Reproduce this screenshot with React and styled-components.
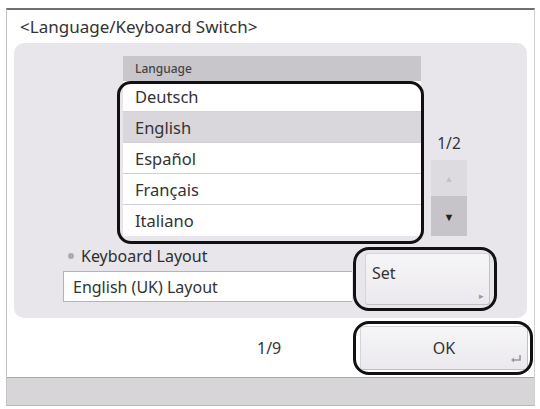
import React from 'react';
import styled, { createGlobalStyle } from 'styled-components';

const GlobalStyle = createGlobalStyle`
    html, body {
        margin: 0;
        padding: 0;
        background: #fff;
    }
    body {
        font-family: "Noto Sans", "Liberation Sans", sans-serif;
        color: #333;
    }
`

const Frame = styled.div`
    margin: 8px 0 0 6px;
    width: 529px;
    height: 398px;
    box-sizing: border-box;
    border-top: 2px solid #707070;
    border-left: 1px solid #c4c4c4;
    border-right: 1px solid #cfcfcf;
    border-bottom: 1px solid #b8b8b8;
    display: flex;
    flex-direction: column;
    background: #fff;
`

const Title = styled.div`
    height: 33px;
    display: flex;
    align-items: center;
    padding-left: 13px;
    font-size: 17px;
    color: #333;
`

const Panel = styled.div`
    margin: 0 7px 0 7px;
    height: 275px;
    box-sizing: border-box;
    padding: 13px 0 0 0;
    background: #e8e6ea;
    border-radius: 10px;
    display: flex;
    flex-direction: column;
`

const ListRow = styled.div`
    display: flex;
    align-items: flex-end;
    padding-left: 109px;
`

const List = styled.div`
    width: 298px;
    display: flex;
    flex-direction: column;
`

const ListHeader = styled.div`
    height: 25px;
    background: #c8c6ca;
    display: flex;
    align-items: center;
    padding-left: 12px;
    font-size: 12px;
    font-weight: 500;
    color: #444;
`

const Rows = styled.div`
    position: relative;
    display: flex;
    flex-direction: column;
    &::after {
        content: '';
        position: absolute;
        left: -6px;
        right: -3px;
        top: 0;
        bottom: -8px;
        border: 3px solid #111;
        border-radius: 14px;
        pointer-events: none;
    }
`

const Row = styled.div`
    height: 31px;
    box-sizing: border-box;
    display: flex;
    align-items: center;
    padding-left: 12px;
    font-size: 16.5px;
    color: #333;
    background: ${p => (p.selected ? '#d9d7db' : '#fff')};
    border-bottom: 1px solid #d3d1d5;
    &:last-child {
        border-bottom: none;
    }
`

const ScrollColumn = styled.div`
    margin-left: 10px;
    width: 36px;
    display: flex;
    flex-direction: column;
    align-items: center;
`

const PageLabel = styled.div`
    font-size: 15.5px;
    margin-bottom: 6px;
    color: #333;
`

const ScrollButton = styled.div`
    width: 36px;
    height: ${p => p.h}px;
    display: flex;
    align-items: center;
    justify-content: center;
    background: ${p => (p.disabled ? '#dddbdf' : '#c6c4c8')};
    color: ${p => (p.disabled ? '#c4c2c6' : '#222')};
    font-size: ${p => (p.disabled ? 9 : 11)}px;
`

const KeyboardRow = styled.div`
    display: flex;
    margin-top: 11px;
    padding-left: 49px;
`

const KeyboardField = styled.div`
    width: 289px;
    display: flex;
    flex-direction: column;
`

const FieldLabel = styled.div`
    height: 18px;
    display: flex;
    align-items: center;
    font-size: 16px;
    color: #2e2e2e;
    &::before {
        content: '';
        width: 6px;
        height: 6px;
        border-radius: 50%;
        background: #aaa;
        margin: 0 7px 0 5px;
    }
`

const FieldBox = styled.div`
    margin-top: 6px;
    height: 31px;
    box-sizing: border-box;
    background: #fff;
    border: 1px solid #b5b3b7;
    border-right: none;
    display: flex;
    align-items: center;
    padding-left: 9px;
    font-size: 16px;
    color: #333;
`

const Annotated = styled.div`
    position: relative;
    &::after {
        content: '';
        position: absolute;
        inset: ${p => p.inset};
        border: 3px solid #111;
        border-radius: 16px;
        pointer-events: none;
    }
`

const SetWrap = styled(Annotated)`
    margin: 6px 0 0 13px;
`

const KeyButton = styled.div`
    position: relative;
    width: ${p => p.w}px;
    height: ${p => p.h}px;
    box-sizing: border-box;
    background: linear-gradient(#f6f5f7, #ebe9ed);
    border: 1px solid #d6d4d8;
    border-right-color: #c2c0c4;
    border-bottom-color: #c2c0c4;
    border-radius: 3px;
    display: flex;
    align-items: ${p => (p.center ? 'center' : 'flex-start')};
    justify-content: ${p => (p.center ? 'center' : 'flex-start')};
    padding: ${p => (p.center ? '0' : '8px 0 0 6px')};
    font-size: 16px;
    color: #333;
`

const Corner = styled.span`
    position: absolute;
    right: 5px;
    bottom: 4px;
    color: #9a989c;
    font-size: ${p => p.size}px;
    line-height: 1;
`

const Footer = styled.div`
    height: 59px;
    display: flex;
    align-items: center;
    padding-right: 6px;
`

const FooterPage = styled.div`
    margin-left: 250px;
    font-size: 16px;
    color: #333;
`

const OkWrap = styled(Annotated)`
    margin-left: auto;
`

const BottomBar = styled.div`
    flex: 1;
    background: #d7d5d8;
    border-top: 1px solid #a9a7ab;
`

const languages = ['Deutsch', 'English', 'Español', 'Français', 'Italiano'];

const EnterIcon = () => (
    <svg width="12" height="10" viewBox="0 0 12 10">
        <path d="M10 1 V6 H3" fill="none" stroke="#9a989c" strokeWidth="1.6" />
        <path d="M1 6 L4 3.5 V8.5 Z" fill="#9a989c" />
    </svg>
);

const App = () => {
    return <>
        <GlobalStyle />
        <Frame>
            <Title>&lt;Language/Keyboard Switch&gt;</Title>
            <Panel>
                <ListRow>
                    <List>
                        <ListHeader>Language</ListHeader>
                        <Rows>
                            {languages.map((lang, index) => (
                                <Row key={lang} selected={index === 1}>{lang}</Row>
                            ))}
                        </Rows>
                    </List>
                    <ScrollColumn>
                        <PageLabel>1/2</PageLabel>
                        <ScrollButton h={36} disabled>▲</ScrollButton>
                        <ScrollButton h={40}>▼</ScrollButton>
                    </ScrollColumn>
                </ListRow>
                <KeyboardRow>
                    <KeyboardField>
                        <FieldLabel>Keyboard Layout</FieldLabel>
                        <FieldBox>English (UK) Layout</FieldBox>
                    </KeyboardField>
                    <SetWrap inset="-6px -7px -6px -12px">
                        <KeyButton w={125} h={52}>
                            Set
                            <Corner size={9}>▸</Corner>
                        </KeyButton>
                    </SetWrap>
                </KeyboardRow>
            </Panel>
            <Footer>
                <FooterPage>1/9</FooterPage>
                <OkWrap inset="-5px -5px -5px -7px">
                    <KeyButton w={168} h={44} center>
                        OK
                        <Corner size={10}><EnterIcon /></Corner>
                    </KeyButton>
                </OkWrap>
            </Footer>
            <BottomBar />
        </Frame>
    </>
}

export default App;
